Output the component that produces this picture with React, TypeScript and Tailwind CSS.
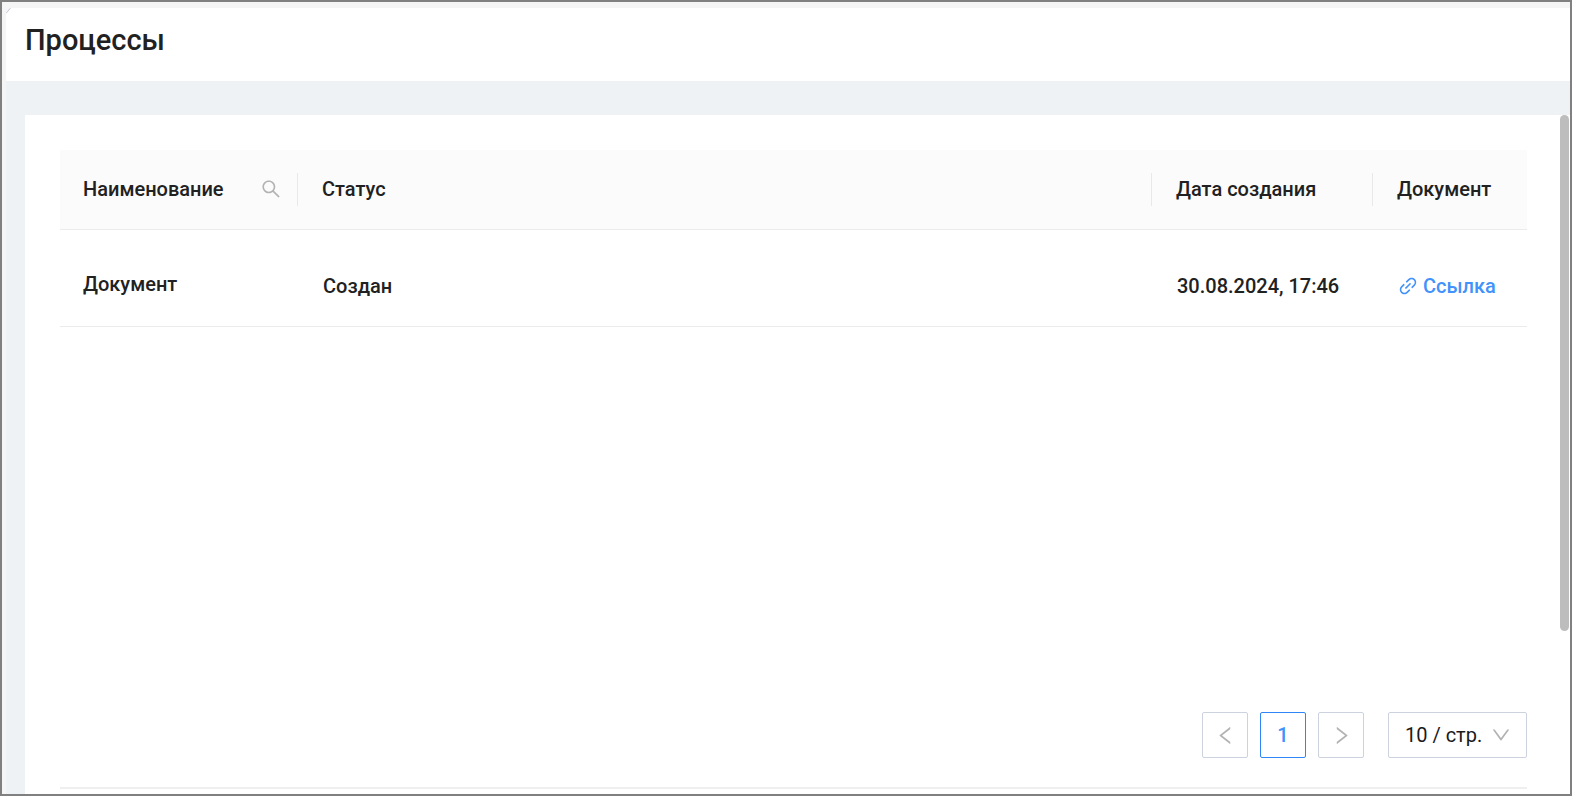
import { AiOutlineDown, AiOutlineLeft, AiOutlineLink, AiOutlineRight, AiOutlineSearch } from "react-icons/ai";

const rows = [{ name: "Документ", status: "Создан", created: "30.08.2024, 17:46" }];

function Divider() {
  return <span aria-hidden="true" className="h-[33px] w-px shrink-0 bg-[#e9e9e9]" />;
}

function ProcessTable() {
  return (
    <table className="w-full table-fixed border-collapse text-left text-xl font-medium leading-6">
      <colgroup>
        <col className="w-[238px]" />
        <col />
        <col className="w-[221px]" />
        <col className="w-[154px]" />
      </colgroup>
      <thead className="bg-[#fbfbfb]">
        <tr className="h-[79px] border-b border-[#ebebeb]">
          <th scope="col" className="py-0 pl-[23px] font-medium">
            <div className="flex items-center">
              Наименование
              <button type="button" aria-label="Поиск" className="ml-auto mr-[15px] text-[#b3b3b3]">
                <AiOutlineSearch size={22} />
              </button>
              <Divider />
            </div>
          </th>
          <th scope="col" className="py-0 pl-6 font-medium">
            <div className="flex items-center justify-between">
              Статус
              <Divider />
            </div>
          </th>
          <th scope="col" className="py-0 pl-6 font-medium">
            <div className="flex items-center justify-between">
              Дата создания
              <Divider />
            </div>
          </th>
          <th scope="col" className="py-0 pl-6 font-medium">Документ</th>
        </tr>
      </thead>
      <tbody>
        {rows.map((row) => (
          <tr key={row.created} className="h-[97px] border-b border-[#ebebeb]">
            <td className="pl-[23px] pt-3">{row.name}</td>
            <td className="pl-[25px] pt-4">{row.status}</td>
            <td className="pl-[25px] pt-4 whitespace-nowrap">{row.created}</td>
            <td className="pl-6 pt-4">
              <a href="#document" className="flex items-center gap-1 text-[#4192fb]">
                <AiOutlineLink size={22} />
                Ссылка
              </a>
            </td>
          </tr>
        ))}
      </tbody>
    </table>
  );
}

function Pagination() {
  return (
    <nav aria-label="Страницы" className="flex items-center justify-end gap-3 text-xl">
      <button type="button" aria-label="Назад" className="flex size-[46px] items-center justify-center rounded-xs border border-[#cdd3de] text-[#b3b3b3]">
        <AiOutlineLeft size={23} />
      </button>
      <button type="button" aria-current="page" className="size-[46px] rounded-xs border border-[#2f86f6] font-medium text-[#4192fb]">
        1
      </button>
      <button type="button" aria-label="Вперёд" className="flex size-[46px] items-center justify-center rounded-xs border border-[#cdd3de] text-[#b3b3b3]">
        <AiOutlineRight size={23} />
      </button>
      <div className="relative ml-3">
        <select aria-label="Строк на странице" className="h-[46px] w-[139px] appearance-none rounded-xs border border-[#cdd3de] bg-white pl-4 text-[#1a1a1a]">
          <option>10 / стр.</option>
          <option>20 / стр.</option>
          <option>50 / стр.</option>
        </select>
        <AiOutlineDown size={22} className="pointer-events-none absolute right-[15px] top-3 text-[#b3b3b3]" />
      </div>
    </nav>
  );
}

export default function App() {
  return (
    <div className="flex min-h-screen flex-col border-2 border-[#808080] bg-[#f5f5f5] pl-1 pt-1.5 font-[Roboto,sans-serif] text-[#212121]">
      <header className="relative bg-white px-[19px] pt-3 pb-[21px]">
        <svg aria-hidden="true" viewBox="0 0 6 6" className="absolute left-0 top-0 size-1.5">
          <path d="M0 0H4.5L0 5.5Z" fill="#f5f5f5" />
          <path d="M0 5.5L4.5 0" stroke="#c9c9dc" fill="none" />
        </svg>
        <h1 className="text-[29px] font-medium leading-10">Процессы</h1>
      </header>
      <div className="flex flex-1 flex-col bg-[#eef2f5] pl-[19px] pt-[34px]">
        <div className="flex flex-1 bg-white">
          <main className="flex flex-1 flex-col pl-[35px] pr-[33px] pt-[35px]">
            <ProcessTable />
            <div className="mt-auto border-b-2 border-[#efefef] pb-[29px]">
              <Pagination />
            </div>
            <div className="h-[5px]" />
          </main>
          <div className="w-[10px] pr-px">
            <div className="h-[516px] rounded-full bg-[#bdbdbd]" />
          </div>
        </div>
      </div>
    </div>
  );
}
